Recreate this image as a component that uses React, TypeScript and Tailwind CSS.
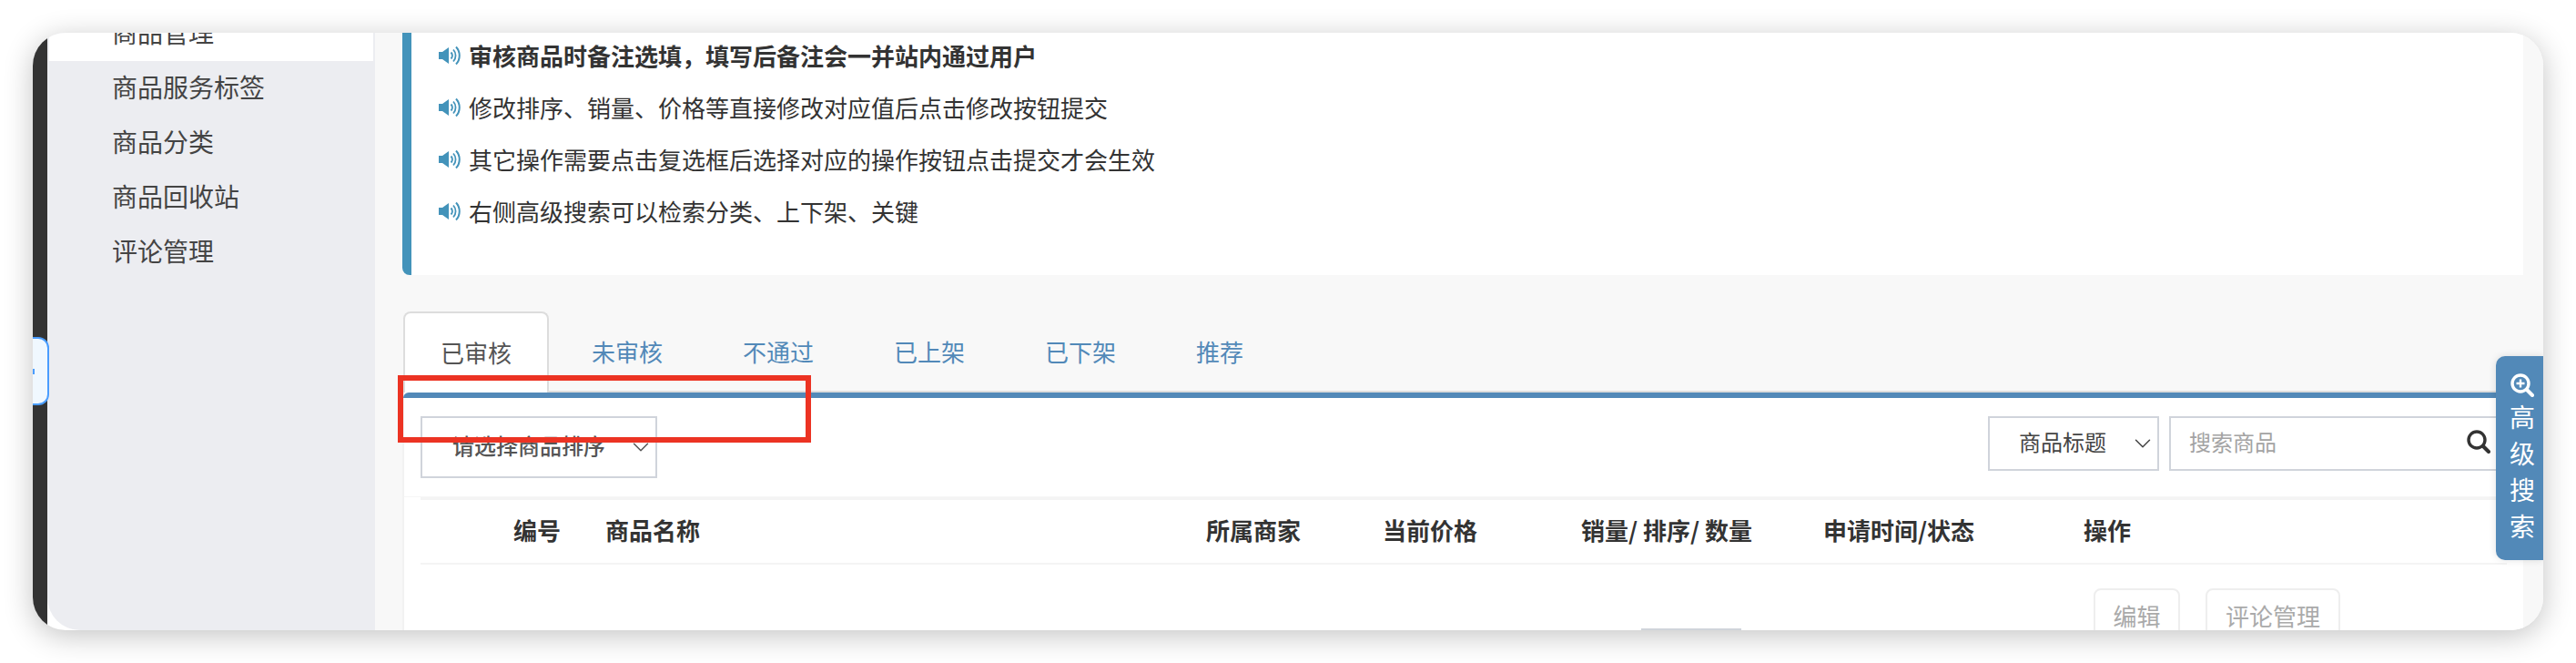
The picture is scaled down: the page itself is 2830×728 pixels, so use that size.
import { ChevronDown } from 'lucide-react';

const menuItems = ['商品管理', '商品服务标签', '商品分类', '商品回收站', '评论管理'];

const notices = [
    '审核商品时备注选填，填写后备注会一并站内通过用户',
    '修改排序、销量、价格等直接修改对应值后点击修改按钮提交',
    '其它操作需要点击复选框后选择对应的操作按钮点击提交才会生效',
    '右侧高级搜索可以检索分类、上下架、关键',
];

const tabs = ['未审核', '不通过', '已上架', '已下架', '推荐'];

const columns = ['编号', '商品名称', '所属商家', '当前价格', '销量/ 排序/ 数量', '申请时间/状态', '操作'];

function SpeakerIcon() {
    return (
        <svg width="24" height="22" viewBox="0 0 24 22" className="shrink-0" fill="none" stroke="#4393ba">
            <path d="M0 7h4l7-5v18l-7-5H0z" fill="#4393ba" stroke="none" />
            <path d="M13.500 7.500c1.800 2 1.800 5 0 7" strokeWidth="2" />
            <path d="M16 4.500c3.400 3.600 3.400 9.400 0 13" strokeWidth="1.800" />
            <path d="M19 1.500c5 5.200 5 13.800 0 19" strokeWidth="2" />
        </svg>
    );
}

function SearchIcon({ plus, className }: { plus?: boolean; className?: string }) {
    return (
        <svg viewBox="0 0 26 26" className={className} fill="none" stroke="currentColor">
            <circle cx="11" cy="11" r="9" strokeWidth="3.400" />
            <path d="M18 18l6 6" strokeWidth="4" strokeLinecap="round" />
            {plus && <path d="M11 6.500v9M6.500 11h9" strokeWidth="2.400" />}
        </svg>
    );
}

export default function App() {
    return (
        <div className="w-[2830px] h-[728px] p-[36px] bg-white font-['Noto_Sans_CJK_SC','Liberation_Sans',sans-serif]">
            <div className="relative flex h-[656px] overflow-hidden rounded-[36px] shadow-[0_6px_32px_rgba(0,0,0,0.24)]">
                {/* Dark strip */}
                <div className="w-[16px] shrink-0 bg-[#333333]" />

                {/* Sidebar */}
                <aside className="w-[360px] shrink-0 rounded-bl-[36px] bg-[#ecedf1] px-[2px]">
                    <ul className="-mt-[29px] text-[28px] leading-[56px] text-[#444444]">
                        {menuItems.map((item, i) => (
                            <li key={item} className={`h-[60px] pl-[69px] ${i === 0 ? 'bg-white' : ''}`}>
                                {item}
                            </li>
                        ))}
                    </ul>
                </aside>

                {/* Main */}
                <main className="flex min-w-0 flex-1 flex-col bg-[#f8f8f8] pl-[30px] pr-[22px]">
                    <div className="h-[266px] shrink-0 rounded-bl-[8px] border-l-[10px] border-[#4393ba] bg-white pl-[30px]">
                        <ul className="-mt-[4px] text-[26px] text-[#333333]">
                            {notices.map((text, i) => (
                                <li key={text} className={`flex h-[57px] items-center gap-[9px] ${i === 0 ? 'font-bold' : ''}`}>
                                    <SpeakerIcon />
                                    <span>{text}</span>
                                </li>
                            ))}
                        </ul>
                    </div>

                    {/* Tabs */}
                    <div className="mt-[40px] flex h-[89px] shrink-0 border-b-2 border-[#dddddd] pl-px text-[26px]">
                        <div className="flex h-[89px] items-center rounded-t-[8px] border-2 border-b-0 border-[#dddddd] bg-white px-[39px] pb-[2px] text-[#555555]">
                            已审核
                        </div>
                        {tabs.map((tab) => (
                            <div key={tab} className="ml-[6px] flex h-[87px] items-center px-[41px] text-[#5289b8]">
                                {tab}
                            </div>
                        ))}
                    </div>

                    {/* Panel */}
                    <div className="flex-1 border-l-2 border-[#f2f2f2] bg-white">
                        <div className="-ml-px h-[6px] rounded-tl-[6px] bg-[#5289b8]" />
                        <div className="flex h-[109px] items-start justify-between border-b border-[#f6f6f6] px-[18px] pt-[20px] text-[24px]">
                            <div className="flex h-[68px] w-[260px] items-center justify-between border-2 border-[#d0d4db] pb-[4px] pl-[33px] pr-[1px] font-medium text-[#555555]">
                                <span>请选择商品排序</span>
                                <ChevronDown size={30} strokeWidth={1.2} className="translate-y-[2px]" />
                            </div>
                            <div className="flex gap-[11px]">
                                <div className="flex h-[60px] w-[188px] items-center justify-between border-2 border-[#d0d4db] pb-[4px] pl-[32px] pr-[1px] text-[#444444]">
                                    <span>商品标题</span>
                                    <ChevronDown size={30} strokeWidth={1.2} className="translate-y-[2px]" />
                                </div>
                                <div className="flex h-[60px] w-[371px] items-center justify-between border-2 border-[#d0d4db] pb-[4px] pl-[20px] pr-[16px] text-[#a3a3a3]">
                                    <span>搜索商品</span>
                                    <SearchIcon className="h-[26px] w-[26px] text-[#333333]" />
                                </div>
                            </div>
                        </div>

                        <div className="mx-[18px] border-t-[3px] border-[#f4f4f4]">
                            <div className="grid h-[71px] grid-cols-[101px_660px_194px_218px_266px_286px_1fr] items-center border-b-2 border-[#f4f4f4] pb-[4px] pl-[102px] text-[26px] font-bold text-[#333333]">
                                {columns.map((col) => (
                                    <div key={col} className="whitespace-nowrap">{col}</div>
                                ))}
                            </div>
                            <div className="grid grid-cols-[101px_660px_194px_218px_266px_286px_1fr] pl-[102px]">
                                <div className="col-start-5 ml-[66px] mt-[70px] h-[60px] w-[110px] border-2 border-[#d0d4db]" />
                                <div className="col-start-7 ml-[11px] mt-[26px] flex gap-[28px] text-[26px] text-[#aaaaaa]">
                                    <div className="flex h-[62px] w-[95px] items-center justify-center rounded-[8px] border-2 border-[#eeeeee] pb-[4px]">编辑</div>
                                    <div className="flex h-[62px] w-[148px] items-center justify-center rounded-[8px] border-2 border-[#eeeeee] pb-[4px]">评论管理</div>
                                </div>
                            </div>
                        </div>
                    </div>
                </main>

                {/* Collapse handle */}
                <div className="absolute left-0 top-[334px] flex h-[75px] w-[18px] items-center rounded-r-[12px] border-2 border-l-0 border-[#4a9dff] bg-[#f0f8ff]">
                    <div className="h-[6px] w-[2px] bg-[#4a9dff]" />
                </div>

                {/* Advanced search */}
                <div className="absolute right-0 top-[355px] flex h-[224px] w-[52px] flex-col items-center rounded-l-[10px] bg-[#5289b8] pl-[6px] pt-[19px] text-[28px] leading-[40px] text-white shadow-[0_0_8px_rgba(0,0,0,0.12)]">
                    <SearchIcon plus className="h-[26px] w-[26px]" />
                    <div className="mt-[1px] w-[28px] text-center">高级搜索</div>
                </div>

                {/* Annotation */}
                <div className="absolute left-[401px] top-[376px] h-[74px] w-[454px] border-[6px] border-[#ec3323]" />
            </div>
        </div>
    );
}
